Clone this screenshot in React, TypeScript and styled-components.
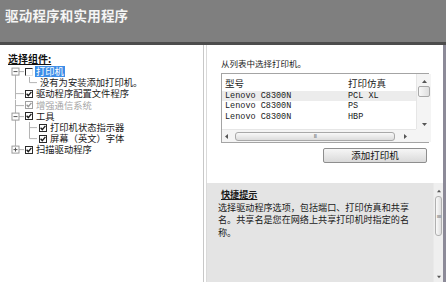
import styled, { createGlobalStyle } from 'styled-components'

const GlobalStyle = createGlobalStyle`
  html, body { margin: 0; padding: 0; }
  body {
    width: 446px;
    height: 282px;
    overflow: hidden;
    background: #fff;
    font-family: "Noto Sans CJK SC", "Noto Sans", sans-serif;
    color: #1a1a1a;
  }
  * { box-sizing: border-box; }
`

type Trunk = 'start' | 'full' | 'end'

interface TreeItem {
  label: string
  level: 0 | 1
  trunk: Trunk
  expander?: 'minus' | 'plus'
  sub?: 'tee' | 'elbow'
  check: 'on' | 'off' | 'none'
  selected?: boolean
  disabled?: boolean
}

const tree: TreeItem[] = [
  { label: '打印机', level: 0, trunk: 'start', expander: 'minus', check: 'off', selected: true },
  { label: '没有为安装添加打印机。', level: 1, trunk: 'full', sub: 'elbow', check: 'none' },
  { label: '驱动程序配置文件程序', level: 0, trunk: 'full', check: 'on' },
  { label: '增强通信系统', level: 0, trunk: 'full', check: 'on', disabled: true },
  { label: '工具', level: 0, trunk: 'full', expander: 'minus', check: 'on' },
  { label: '打印机状态指示器', level: 1, trunk: 'full', sub: 'tee', check: 'on' },
  { label: '屏幕（英文）字体', level: 1, trunk: 'full', sub: 'elbow', check: 'on' },
  { label: '扫描驱动程序', level: 0, trunk: 'end', expander: 'plus', check: 'on' },
]

const printers = [
  { model: 'Lenovo C8300N', emu: 'PCL XL' },
  { model: 'Lenovo C8300N', emu: 'PS' },
  { model: 'Lenovo C8300N', emu: 'HBP' },
]

const ROW_H = 11.2
const LINE = '#b4b4b4'

function Lines({ item }: { item: TreeItem }) {
  const w = item.level === 0 ? 24 : 38
  const mid = ROW_H / 2
  const top = item.trunk === 'start' ? mid + 3.5 : 0
  const bottom = item.trunk === 'end' ? mid - 3.5 : ROW_H
  return (
    <svg width={w} height={ROW_H} viewBox={`0 0 ${w} ${ROW_H}`}>
      <line x1={15.5} y1={top} x2={15.5} y2={bottom} stroke={LINE} />
      {item.level === 0 && (
        <line x1={item.expander ? 19 : 15.5} y1={mid} x2={24} y2={mid} stroke={LINE} />
      )}
      {item.sub && (
        <>
          <line x1={29.5} y1={0} x2={29.5} y2={item.sub === 'tee' ? ROW_H : mid} stroke={LINE} />
          <line x1={29.5} y1={mid} x2={37} y2={mid} stroke={LINE} />
        </>
      )}
      {item.expander && (
        <>
          <rect x={12} y={mid - 3.5} width={7} height={7} fill="#fff" stroke="#9a9a9a" />
          <line x1={13.5} y1={mid} x2={17.5} y2={mid} stroke="#555" />
          {item.expander === 'plus' && (
            <line x1={15.5} y1={mid - 2} x2={15.5} y2={mid + 2} stroke="#555" />
          )}
        </>
      )}
    </svg>
  )
}

function CheckMark({ color }: { color: string }) {
  return (
    <svg width="6" height="6" viewBox="0 0 6 6">
      <path d="M0.6 2.8 L2.3 4.6 L5.4 0.9" fill="none" stroke={color} strokeWidth="1.4" />
    </svg>
  )
}

function Arrow({ dir, size = 5 }: { dir: 'up' | 'down' | 'left' | 'right'; size?: number }) {
  const pts = {
    up: '0,4 2.5,1 5,4',
    down: '0,1 2.5,4 5,1',
    left: '4,0 1,2.5 4,5',
    right: '1,0 4,2.5 1,5',
  }[dir]
  return (
    <svg width={size} height={size} viewBox="0 0 5 5">
      <polygon points={pts} fill="#555" />
    </svg>
  )
}

export default function App() {
  return (
    <>
      <GlobalStyle />
      <Window>
        <Header>
          <Title>驱动程序和实用程序</Title>
        </Header>
        <Body>
          <LeftPanel>
            <SectionLabel>选择组件:</SectionLabel>
            <Tree>
              {tree.map((item) => (
                <TreeRow key={item.label}>
                  <Lines item={item} />
                  {item.check !== 'none' && (
                    <Check $on={item.check === 'on'} $disabled={item.disabled}>
                      {item.check === 'on' && (
                        <CheckMark color={item.disabled ? '#9a9a9a' : '#1e1e1e'} />
                      )}
                    </Check>
                  )}
                  <TreeLabel
                    $selected={item.selected}
                    $disabled={item.disabled}
                    $bare={item.check === 'none'}
                  >
                    {item.label}
                  </TreeLabel>
                </TreeRow>
              ))}
            </Tree>
          </LeftPanel>

          <RightPanel>
            <PickSection>
              <Prompt>从列表中选择打印机。</Prompt>
              <ListBox>
                <ListView>
                  <ListHeader>
                    <span>型号</span>
                    <span>打印仿真</span>
                  </ListHeader>
                  {printers.map((p, i) => (
                    <ListRow key={p.emu} $active={i === 0}>
                      <span>{p.model}</span>
                      <span>{p.emu}</span>
                    </ListRow>
                  ))}
                </ListView>
                <VScroll>
                  <Arrow dir="up" />
                  <VThumbTrack>
                    <VThumb />
                  </VThumbTrack>
                  <Arrow dir="down" />
                </VScroll>
                <HScroll>
                  <Arrow dir="left" />
                  <HThumb>
                    <Grip>III</Grip>
                  </HThumb>
                  <Arrow dir="right" />
                </HScroll>
                <Corner />
              </ListBox>
              <AddButton>添加打印机</AddButton>
            </PickSection>

            <HintPanel>
              <HintText>
                <HintTitle>快捷提示</HintTitle>
                <p>
                  选择驱动程序选项，包括端口、打印仿真和共享名。共享名是您在网络上共享打印机时指定的名称。
                </p>
              </HintText>
              <HintScroll>
                <Arrow dir="up" size={4} />
                <HintThumbTrack>
                  <HintThumb>
                    <Grip $vertical>III</Grip>
                  </HintThumb>
                </HintThumbTrack>
                <Arrow dir="down" size={4} />
              </HintScroll>
            </HintPanel>
          </RightPanel>
        </Body>
      </Window>
    </>
  )
}

const Window = styled.div`
  width: 446px;
  height: 282px;
  display: flex;
  flex-direction: column;
`

const Header = styled.header`
  height: 45px;
  flex: none;
  background: #7f7f7f;
  border-bottom: 3px solid #4c4c4c;
  display: flex;
  align-items: flex-start;
  padding: 6px 0 0 5px;
`

const Title = styled.h1`
  margin: 0;
  font-size: 13.5px;
  line-height: 18px;
  font-weight: 700;
  color: #f4f4f4;
  letter-spacing: 0.2px;
`

const Body = styled.div`
  flex: 1;
  display: grid;
  grid-template-columns: 204px 242px;
  min-height: 0;
`

const LeftPanel = styled.section`
  border-right: 1px solid #c8c8c8;
  padding: 7px 0 0 0;
`

const SectionLabel = styled.div`
  margin-left: 8px;
  font-size: 10px;
  line-height: 13px;
  font-weight: 700;
  text-decoration: underline;
  color: #111;
`

const Tree = styled.div`
  margin-top: 1px;
  display: flex;
  flex-direction: column;
`

const TreeRow = styled.div`
  height: ${ROW_H}px;
  display: flex;
  align-items: center;

  svg {
    flex: none;
    display: block;
  }
`

const Check = styled.span<{ $on: boolean; $disabled?: boolean }>`
  flex: none;
  width: 8px;
  height: 8px;
  margin-left: 1px;
  display: flex;
  align-items: center;
  justify-content: center;
  background: #fff;
  border: 1px solid ${(p) => (p.$disabled ? '#a0a0a0' : '#2a2a2a')};
  ${(p) => !p.$on && 'border-color: #2a2a2a #e0e0e0 #e0e0e0 #2a2a2a;'}
`

const TreeLabel = styled.span<{ $selected?: boolean; $disabled?: boolean; $bare?: boolean }>`
  margin-left: ${(p) => (p.$bare ? '1px' : '2px')};
  padding: 0 1px;
  font-size: 9.3px;
  line-height: 11px;
  white-space: nowrap;
  color: ${(p) => (p.$selected ? '#fff' : p.$disabled ? '#a6a6a6' : '#1a1a1a')};
  background: ${(p) => (p.$selected ? '#3d8ee8' : 'transparent')};
`

const RightPanel = styled.section`
  margin-left: 2px;
  border-left: 1px solid #dadada;
  border-right: 3px solid #8c8a98;
  display: flex;
  flex-direction: column;
  min-height: 0;
`

const PickSection = styled.div`
  height: 138px;
  flex: none;
  padding: 12px 0 0 14px;
  display: flex;
  flex-direction: column;
`

const Prompt = styled.div`
  font-size: 8.5px;
  line-height: 12px;
  color: #1a1a1a;
`

const ListBox = styled.div`
  margin-top: 4px;
  width: 208px;
  height: 70px;
  border: 1px solid #a4a4a4;
  display: grid;
  grid-template-columns: 1fr 15px;
  grid-template-rows: 1fr 13px;
  background: #fff;
`

const ListView = styled.div`
  display: flex;
  flex-direction: column;
  overflow: hidden;
`

const ListHeader = styled.div`
  height: 17px;
  display: grid;
  grid-template-columns: 123px 1fr;
  align-items: center;
  padding: 1px 0 0 3px;
  font-size: 9.5px;
  color: #222;
`

const ListRow = styled.div<{ $active?: boolean }>`
  height: 10.3px;
  display: grid;
  grid-template-columns: 123px 1fr;
  align-items: center;
  padding-left: 3px;
  font-family: "Liberation Mono", "DejaVu Sans Mono", monospace;
  font-size: 8.5px;
  line-height: 10px;
  color: #1a1a1a;
  background: ${(p) => (p.$active ? '#ececec' : 'transparent')};
`

const VScroll = styled.div`
  background: #f4f4f4;
  border-left: 1px solid #e6e6e6;
  display: flex;
  flex-direction: column;
  align-items: center;
  padding: 5px 0 2px;
`

const VThumbTrack = styled.div`
  flex: 1;
  width: 100%;
  padding: 2px 1px;
`

const VThumb = styled.div`
  height: 11px;
  border: 1px solid #a8a8a8;
  border-radius: 2px;
  background: linear-gradient(to right, #f8f8f8, #dedede);
`

const HScroll = styled.div`
  background: #f4f4f4;
  border-top: 1px solid #e6e6e6;
  display: flex;
  align-items: center;
  gap: 6px;
  padding: 0 8px 0 2px;
`

const HThumb = styled.div`
  width: 160px;
  height: 9px;
  border: 1px solid #a8a8a8;
  border-radius: 3px;
  background: linear-gradient(#f8f8f8, #dcdcdc);
  display: flex;
  align-items: center;
  justify-content: center;
  margin-right: 2px;
`

const Grip = styled.span<{ $vertical?: boolean }>`
  font-family: "Liberation Sans", sans-serif;
  font-size: 5px;
  line-height: 5px;
  color: #6a6a6a;
  letter-spacing: -0.5px;
  ${(p) => p.$vertical && 'writing-mode: vertical-rl;'}
`

const Corner = styled.div`
  background: #f4f4f4;
`

const AddButton = styled.button`
  margin: 5px 0 0 102px;
  width: 104px;
  height: 15px;
  padding: 0;
  border: 1px solid #8e8e8e;
  border-radius: 2px;
  background: linear-gradient(#f6f6f6, #dadada);
  font-family: "Noto Sans CJK SC", sans-serif;
  font-size: 9.5px;
  line-height: 13px;
  color: #111;
`

const HintPanel = styled.div`
  flex: 1;
  display: grid;
  grid-template-columns: 1fr 10px;
  background: #e4e4e4;
  min-height: 0;
`

const HintText = styled.div`
  padding: 5px 22px 0 11px;
  font-size: 9.1px;
  line-height: 12.5px;
  color: #1a1a1a;

  p {
    margin: 0;
  }
`

const HintTitle = styled.div`
  margin-left: 3px;
  font-weight: 700;
  text-decoration: underline;
`

const HintScroll = styled.div`
  background: #efefef;
  border-left: 1px solid #e9e9e9;
  display: flex;
  flex-direction: column;
  align-items: center;
  padding: 6px 0 3px;
`

const HintThumbTrack = styled.div`
  flex: 1;
  width: 100%;
  padding: 3px 1px 0;
`

const HintThumb = styled.div`
  height: 40px;
  border: 1px solid #b0b0b0;
  border-radius: 3px;
  background: linear-gradient(to right, #fafafa, #dedede);
  display: flex;
  align-items: center;
  justify-content: center;
`
